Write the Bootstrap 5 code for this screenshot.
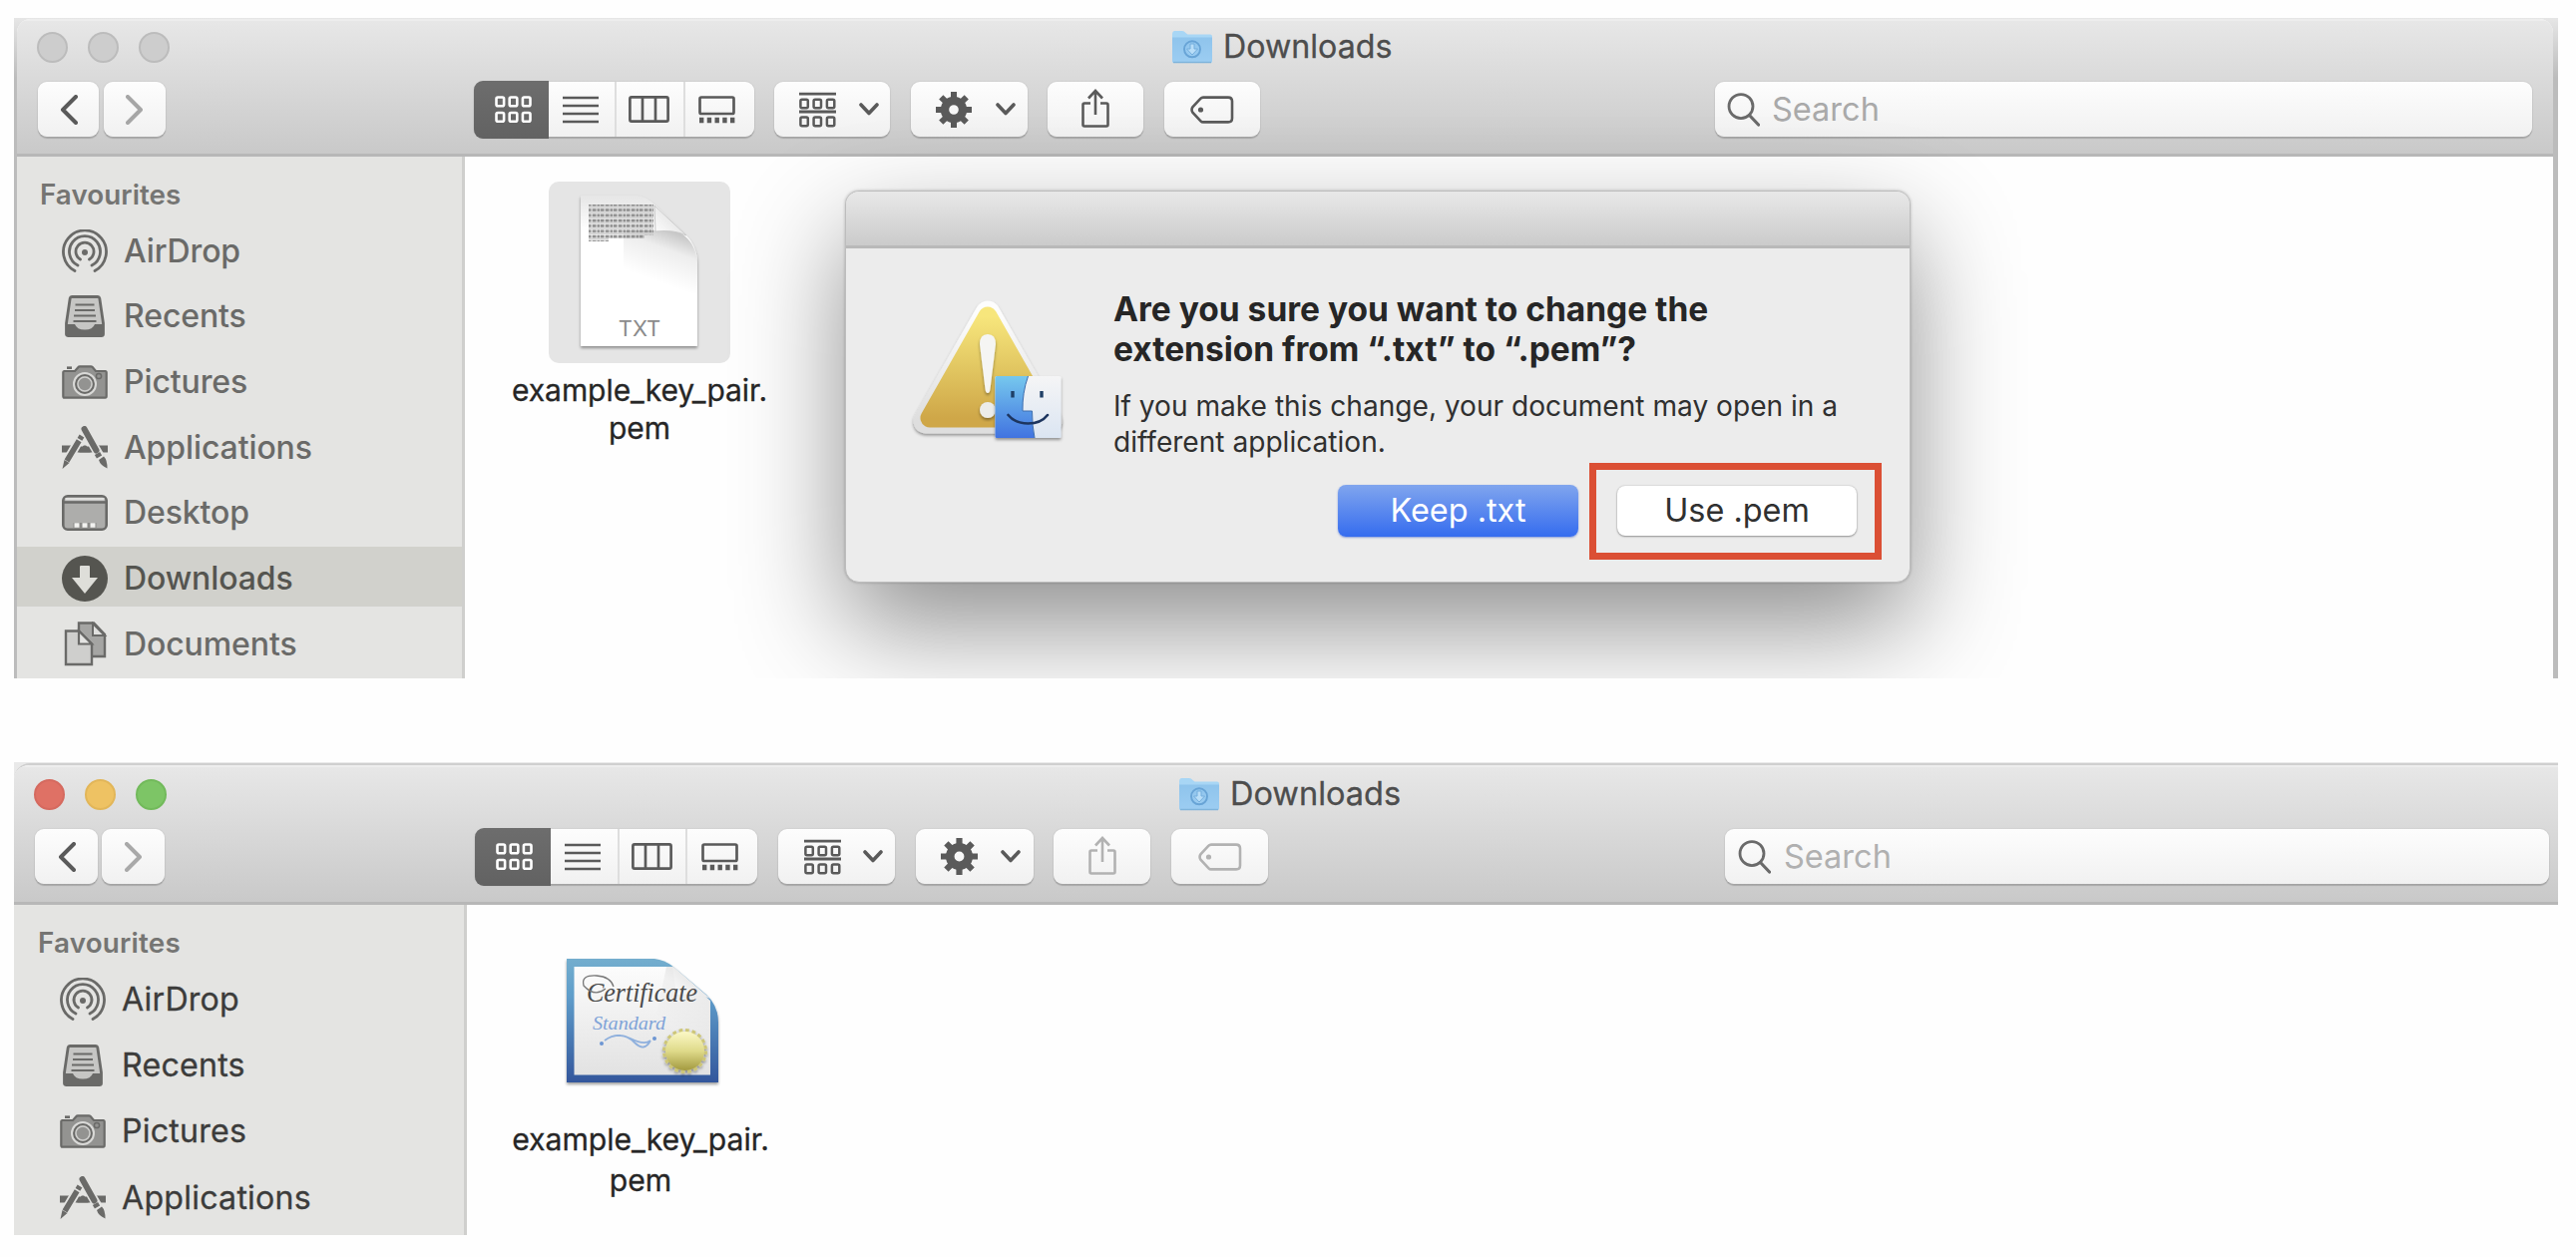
<!DOCTYPE html>
<html lang="en">
<head>
<meta charset="utf-8">
<title>Downloads</title>
<link href="https://cdn.jsdelivr.net/npm/bootstrap@5.3.0/dist/css/bootstrap.min.css" rel="stylesheet">
<style>
  body { font-family: Inter, "Liberation Sans", sans-serif; background: #fefefe; color: #262626; padding: 18px 18px 0 14px; }
  svg { display: block; flex: none; overflow: visible; }
  .finder { position: relative; width: 2550px; overflow: hidden; background: #fefefe; --tool: #5a5a5a; --dim: #5a5a5a; }
  .finder-back { height: 662px; background: linear-gradient(#e6e6e6, #bcbcbc 60px); padding: 1px 5px 0 3px; }
  .finder-back .pane-frame { border-radius: 14px 14px 0 0; height: 661px; }
  .finder-front { margin-top: 84px; height: 474px; padding-top: 1px; background: #e9e9e9; --dim: #b2b2b2; }
  .finder-front .pane-frame { border-radius: 16px 0 0 0; height: 473px; border-top: 2px solid #cfcfcf; }
  .pane-frame { overflow: hidden; background: #fefefe; }
  .titlebar { background: linear-gradient(#e7e7e7, #c9c9c9); border-bottom: 3px solid #b7b7b7; height: 138px; border-top: 2px solid #ededed; }
  .finder-front .titlebar { height: 140px; }
  .title-row { height: 52px; color: #4d4d4d; font-size: 32.2px; font-weight: 400; -webkit-text-stroke: .3px; }
  .finder-front .title-row { height: 54px; }
  .lamps { width: 1154px; gap: 20px; padding-left: 20px; }
  .lamp { width: 31px; height: 31px; border-radius: 50%; background: #cdcdcd; border: 2px solid #bcbcbc; }
  .lamp-r { background: #df7165; border-color: #d56a5f; }
  .lamp-y { background: #eec263; border-color: #e2b659; }
  .lamp-g { background: #7dc566; border-color: #72ba5b; }
  .tool-row { color: var(--tool); }
  .tool { height: 55px; border-radius: 9px; background: linear-gradient(#fdfdfd, #f1f1f1); box-shadow: 0 2px 1px rgba(0,0,0,.17), 0 0 2px rgba(0,0,0,.13); display: flex; align-items: center; border: 0; padding: 0; color: inherit; }
  .tool > svg, .seg > svg { margin: 0 auto; }
  .seg { height: 55px; display: flex; align-items: center; border-right: 2px solid #dedede; flex: 1; padding-right: 2px; }
  .seg:last-child { border: 0; padding-right: 5px; }
  .seg-on { flex: none; height: 58px; margin: -2px 0; background: linear-gradient(#6d6d6d, #626262); color: #fff; border: 0; border-radius: 9px 0 0 9px; padding: 0 0 0 3px; }
  .find-box { font-size: 32.5px; color: #a9a9a9; line-height: 1; }
  .side { width: 449px; background: #e4e4e2; border-right: 3px solid #cfcfcd; color: #6a6a68; font-size: 32px; font-weight: 500; letter-spacing: -.1px; line-height: 60px; }
  .finder-front .side { width: 454px; color: #3c3c3b; font-weight: 400; letter-spacing: .2px; font-size: 32.2px; -webkit-text-stroke: .3px; }
  .side-head { font-size: 27.8px; font-weight: 600; color: #757573; line-height: 40px; -webkit-text-stroke: 0; }
  .finder-back .side-head { letter-spacing: .05px; }
  .side-item { height: 60px; margin-bottom: 5.7px; gap: 16px; padding: 3px 0 0 45px; }
  .side-item svg { color: #6a6a68; }
  .side-on { background: #d1d1cc; color: #555550; }
  .side-on svg { color: #555550; }
  .finder-front .side-item { margin-bottom: 6.4px; padding-left: 46px; }
  .file-item { width: 300px; text-align: center; font-size: 30px; letter-spacing: -.05px; -webkit-text-stroke: .3px; }
  .file-item svg { -webkit-text-stroke: 0; }
  .thumb { width: 182px; height: 182px; border-radius: 10px; margin: 0 auto; }
  .thumb-on { background: #e5e5e5; }
  .alert-box { position: absolute; left: 833px; top: 173px; width: 1068px; height: 393px; border-radius: 14px; background: #ececec; border: 1px solid #bdbdbd; box-shadow: 0 44px 106px rgba(0,0,0,.44), 0 0 3px rgba(0,0,0,.25); }
  .alert-bar { height: 57px; border-radius: 13px 13px 0 0; background: linear-gradient(#e8e8e8, #cbcbcb); border-bottom: 3px solid #b9b9b9; }
  .alert-h { font-size: 33.5px; font-weight: 700; line-height: 40px; color: #262626; margin: 0; }
  .alert-p { font-size: 28.1px; line-height: 35.5px; margin: 0; color: #303030; }
  .choice { font-size: 32.4px; line-height: 1; padding: 0; border: 0; border-radius: 8px; font-weight: 400; }
  .choice-main { width: 241px; height: 52px; color: #fff; background: linear-gradient(#80a5ee, #356cef); margin: 22px 11px 0 0; box-shadow: 0 1px 2px rgba(40,80,200,.5); }
  .choice-alt { width: 240px; height: 50px; color: #303030; background: #fff; box-shadow: 0 1px 2px rgba(0,0,0,.35), 0 0 2px rgba(0,0,0,.2); }
  .outlined { width: 293px; height: 97px; border: 7px solid #db4f34; padding-top: 16px; padding-left: 21px; }
</style>
<script src="https://cdn.jsdelivr.net/npm/bootstrap@5.3.0/dist/js/bootstrap.bundle.min.js"></script>
</head>
<body>
<svg width="0" height="0" class="position-absolute">
  <defs>
    <linearGradient id="gFolder" x1="0" y1="0" x2="0" y2="1"><stop offset="0" stop-color="#8fc4ec"/><stop offset="1" stop-color="#9ccdf2"/></linearGradient>
    <linearGradient id="gWarn" x1="0" y1="0" x2="0" y2="1"><stop offset="0" stop-color="#f7e67c"/><stop offset=".5" stop-color="#e2c762"/><stop offset="1" stop-color="#cfa748"/></linearGradient>
    <linearGradient id="gWarnEdge" x1="0" y1="0" x2="0" y2="1"><stop offset="0" stop-color="#fdfdfd"/><stop offset="1" stop-color="#dedede"/></linearGradient>
    <linearGradient id="gFaceL" x1="0" y1="0" x2="0" y2="1"><stop offset="0" stop-color="#76c8ee"/><stop offset="1" stop-color="#4173e0"/></linearGradient>
    <linearGradient id="gFaceR" x1="0" y1="0" x2="0" y2="1"><stop offset="0" stop-color="#f5f5f6"/><stop offset="1" stop-color="#dbe5f2"/></linearGradient>
    <linearGradient id="gCert" x1="0" y1="0" x2="0" y2="1"><stop offset="0" stop-color="#74aece"/><stop offset=".3" stop-color="#5f9dca"/><stop offset="1" stop-color="#33569c"/></linearGradient>
    <linearGradient id="gPaper" x1="0" y1="0" x2="0" y2="1"><stop offset="0" stop-color="#fcfcfc"/><stop offset="1" stop-color="#e2e2e2"/></linearGradient>
    <linearGradient id="gSeal" x1="0" y1="0" x2="0" y2="1"><stop offset="0" stop-color="#fbf8c6"/><stop offset=".5" stop-color="#dfda8a"/><stop offset="1" stop-color="#a39a3f"/></linearGradient>
    <linearGradient id="gCurl" x1="0" y1="1" x2=".6" y2=".4"><stop offset="0" stop-color="#ffffff"/><stop offset="1" stop-color="#e6e6e6"/></linearGradient>
    <linearGradient id="gShade" x1=".62" y1="0" x2=".3" y2=".75"><stop offset="0" stop-color="#000" stop-opacity=".22"/><stop offset=".35" stop-color="#000" stop-opacity=".07"/><stop offset="1" stop-color="#000" stop-opacity="0"/></linearGradient>
    <linearGradient id="gTop" x1="0" y1="0" x2="0" y2="1"><stop offset="0" stop-color="#000" stop-opacity=".1"/><stop offset="1" stop-color="#000" stop-opacity="0"/></linearGradient>
    <filter id="fDrop" x="-20%" y="-20%" width="140%" height="140%"><feDropShadow dx="0" dy="2" stdDeviation="1.6" flood-opacity=".38"/></filter>
    <pattern id="pText" width="13" height="5.3" patternUnits="userSpaceOnUse"><path d="M0 2H3.6M4.6 2H8.6M9.4 2H12.4" stroke="#8c8c8c" stroke-width="2.800"/><path d="M0 4.500H13" stroke="#cfcfcf" stroke-width="1.500"/></pattern>

    <symbol id="back" viewBox="0 0 18 30"><path d="M16 2 3 15 16 28" fill="none" stroke="currentColor" stroke-width="4" stroke-linecap="round" stroke-linejoin="round"/></symbol>
    <symbol id="down" viewBox="0 0 20 13"><path d="M2 2 10 10.5 18 2" fill="none" stroke="currentColor" stroke-width="3.6" stroke-linecap="round" stroke-linejoin="round"/></symbol>
    <symbol id="icons" viewBox="0 0 37 28"><g fill="none" stroke="currentColor" stroke-width="2.6"><rect x="1.5" y="1.5" width="7.6" height="8.8" rx="1.5"/><rect x="14.7" y="1.5" width="7.6" height="8.8" rx="1.5"/><rect x="27.9" y="1.5" width="7.6" height="8.8" rx="1.5"/><rect x="1.5" y="17" width="7.6" height="8.8" rx="1.5"/><rect x="14.7" y="17" width="7.6" height="8.8" rx="1.5"/><rect x="27.9" y="17" width="7.6" height="8.8" rx="1.5"/></g></symbol>
    <symbol id="lines" viewBox="0 0 36 28"><path d="M0 2H36M0 10H36M0 18H36M0 26H36" stroke="currentColor" stroke-width="2.6"/></symbol>
    <symbol id="cols" viewBox="0 0 41 27"><path d="M3 1.4H38Q39.6 1.4 39.6 3V24Q39.6 25.6 38 25.6H3Q1.4 25.6 1.4 24V3Q1.4 1.4 3 1.4ZM14 1V26M27 1V26" fill="none" stroke="currentColor" stroke-width="2.7"/></symbol>
    <symbol id="gallery" viewBox="0 0 37 28"><rect x="1.5" y="1.5" width="34" height="16.5" rx="1.5" fill="none" stroke="currentColor" stroke-width="2.7"/><path d="M1 24.5H36.5" stroke="currentColor" stroke-width="5.4" stroke-dasharray="4.4 3.35"/></symbol>
    <symbol id="grouped" viewBox="0 0 37 36"><path d="M0 2.2H37M0 20H37" stroke="currentColor" stroke-width="2.8"/><g fill="none" stroke="currentColor" stroke-width="2.5"><rect x="1.4" y="7.8" width="7.4" height="8.4" rx="1.5"/><rect x="14.6" y="7.8" width="7.4" height="8.4" rx="1.5"/><rect x="27.9" y="7.8" width="7.4" height="8.4" rx="1.5"/><rect x="1.4" y="25.6" width="7.4" height="8.6" rx="1.5"/><rect x="14.6" y="25.6" width="7.4" height="8.6" rx="1.5"/><rect x="27.9" y="25.6" width="7.4" height="8.6" rx="1.5"/></g></symbol>
    <symbol id="gear" viewBox="-18 -18 36 36"><circle r="9" fill="none" stroke="currentColor" stroke-width="8.4"/><g stroke="currentColor" stroke-width="6" stroke-linecap="butt"><path d="M0-18V-11M0 18V11M-18 0H-11M18 0H11"/><path d="M0-18V-11M0 18V11M-18 0H-11M18 0H11" transform="rotate(45)"/></g></symbol>
    <symbol id="share" viewBox="0 0 28 39"><path d="M9 14.5H3Q1.5 14.5 1.5 16V36Q1.5 37.5 3 37.5H25Q26.5 37.5 26.5 36V16Q26.5 14.5 25 14.5H19M14 26V2M7 9.5 14 2 21 9.5" fill="none" stroke="currentColor" stroke-width="2.6"/></symbol>
    <symbol id="tag" viewBox="0 0 44 28"><path d="M13 1.6H38Q42 1.6 42 5.5V22.5Q42 26.4 38 26.4H13Q11.5 26.4 10.5 25.3L2.6 17Q.5 14 2.6 11L10.5 2.7Q11.5 1.6 13 1.6Z" fill="none" stroke="currentColor" stroke-width="2.6"/><circle cx="10.5" cy="14" r="2.6" fill="currentColor"/></symbol>
    <symbol id="lens" viewBox="0 0 33 34"><circle cx="14" cy="13.6" r="12" fill="none" stroke="#6a6a6a" stroke-width="2.8"/><path d="M22.5 22.5 31.5 32" stroke="#6a6a6a" stroke-width="3.2" stroke-linecap="round"/></symbol>
    <symbol id="folder" viewBox="0 0 40 33"><path d="M0 3.5Q0 0 2.5 0H10Q12 0 13.5 2L15.5 3.5H38Q40 3.5 40 5.5V30Q40 32 38 32H2Q0 32 0 30Z" fill="#a8d6f5"/><path d="M0 6.5H40V30Q40 32 38 32H2Q0 32 0 30Z" fill="url(#gFolder)"/><path d="M1 31.5H39" stroke="#7fb4db" stroke-width="1.5"/><circle cx="20" cy="18.3" r="8" fill="none" stroke="#68a4d6" stroke-width="1.9"/><path d="M18 13H22V18H25.5L20 24 14.500 18H18Z" fill="#b9def8" stroke="#74aedd" stroke-width="1"/></symbol>

    <symbol id="airdrop" viewBox="0 0 46 44"><g fill="none" stroke="currentColor" stroke-width="2.8" stroke-linecap="round"><path d="M13 41.500A21.500 21.500 0 1 1 33 41.500"/><path d="M16 36A15.500 15.500 0 1 1 30 36" /><path d="M18.500 30A9 9 0 1 1 27.500 30"/></g><circle cx="23" cy="23" r="3" fill="currentColor"/></symbol>
    <symbol id="recents" viewBox="0 0 46 42"><path d="M10 1.500H36Q37.500 1.500 37.800 3L41.500 28V39Q41.500 40.500 39.500 40.500H6.500Q4.500 40.500 4.500 39V28L8.200 3Q8.500 1.500 10 1.500Z" fill="#c6c6c4" stroke="currentColor" stroke-width="2.800"/><path d="M13.500 9.500H32.500M13 15H33M12 20.500H34M11.500 26H34.500" stroke="currentColor" stroke-width="2"/><path d="M4 29H13Q15 34.500 23 34.500T33 29H42V40.500H4Z" fill="currentColor"/></symbol>
    <symbol id="camera" viewBox="0 0 46 34"><path d="M2.500 6H13L16.500 2Q17 1.300 18 1.300H29Q30 1.300 30.700 2L34 6H43.500Q44.700 6 44.700 7.500V31Q44.700 32.700 43.500 32.700H2.500Q1.300 32.700 1.300 31V7.500Q1.300 6 2.500 6Z" fill="#939391" stroke="currentColor" stroke-width="2.2"/><path d="M5 2.700H10" stroke="currentColor" stroke-width="2.6"/><circle cx="23" cy="19" r="11" fill="#939391" stroke="#d9d9d7" stroke-width="2"/><circle cx="23" cy="19" r="8.800" fill="none" stroke="currentColor" stroke-width="1.800"/><circle cx="23" cy="19" r="7" fill="#939391" stroke="#cfcfcd" stroke-width="1.500"/><circle cx="37" cy="11" r="2.600" fill="none" stroke="currentColor" stroke-width="1.500"/></symbol>
    <symbol id="apps" viewBox="0 0 46 43"><path d="M0 19.500H46V26.500H0Z" fill="currentColor"/><path d="M21 3 44 42M25 3 2 42" stroke="#e4e4e2" stroke-width="11"/><path d="M15.500 26.500 19 20.500H27L30.500 26.500Z" fill="currentColor"/><path d="M20 10 5 35" stroke="currentColor" stroke-width="5.500" stroke-dasharray="4 1.500 25 1.500"/><path d="M2.500 34 7.500 37 .5 43Z" fill="currentColor"/><path d="M22.500 3 34.500 24.500" stroke="currentColor" stroke-width="6" stroke-linecap="round"/><path d="M35.500 27.500 37.500 31" stroke="currentColor" stroke-width="6"/><path d="M37 34 42 30.500Q45.500 34 45.500 42.500 38.500 39.500 37 34Z" fill="currentColor"/></symbol>
    <symbol id="desktop" viewBox="0 0 46 36"><rect x="1.300" y="1.300" width="43.400" height="33.400" rx="4.500" fill="#adadab" stroke="currentColor" stroke-width="2.600"/><path d="M3.500 4.200H42.500" stroke="#e0e0de" stroke-width="2.500"/><path d="M2 7.500H44" stroke="currentColor" stroke-width="2.400"/><path d="M11.500 34V28H34.500V34" fill="#8a8a88"/><path d="M12.500 30.500H34" stroke="#f2f2f0" stroke-width="4.500" stroke-dasharray="5 3"/></symbol>
    <symbol id="dload" viewBox="0 0 46 46"><circle cx="23" cy="23" r="23" fill="currentColor"/><path d="M18 11Q18 10 19 10H27Q28 10 28 11V22H36L23 38 10 22H18Z" fill="#deded9"/></symbol>
    <symbol id="docs" viewBox="0 0 46 45"><path d="M17 1.500H32L43 13V35H17Z" fill="#a5a5a3" stroke="currentColor" stroke-width="2.400"/><path d="M31 2V14H43Z" fill="#e0e0de" stroke="currentColor" stroke-width="2"/><path d="M4 9.500H17L30 22.500V43H4Z" fill="#cfcfcd" stroke="currentColor" stroke-width="2.400"/><path d="M17 9.500V22.500H30Z" fill="#e4e4e2" stroke="currentColor" stroke-width="2.200"/></symbol>
  </defs>
</svg>

<main>
  <section class="finder finder-back">
    <div class="pane-frame d-flex flex-column">
      <header class="titlebar">
        <div class="title-row d-flex align-items-center">
          <div class="lamps d-flex"><i class="lamp"></i><i class="lamp"></i><i class="lamp"></i></div>
          <svg class="ms-1" width="40" height="33"><use href="#folder"/></svg>
          <span style="margin-left:11px">Downloads</span>
        </div>
        <div class="tool-row d-flex" style="padding:9px 0 0 21px">
          <div class="tool" style="width:61px"><svg width="18" height="30"><use href="#back"/></svg></div>
          <div class="tool" style="width:62px;margin-left:5px;color:#a6a6a6"><svg width="18" height="30" transform="scale(-1 1)"><use href="#back"/></svg></div>
          <div class="tool" style="width:281px;margin-left:309px">
            <span class="seg seg-on" style="width:75px"><svg width="37" height="28"><use href="#icons"/></svg></span>
            <span class="seg"><svg width="36" height="28"><use href="#lines"/></svg></span>
            <span class="seg"><svg width="41" height="27"><use href="#cols"/></svg></span>
            <span class="seg"><svg width="37" height="28"><use href="#gallery"/></svg></span>
          </div>
          <div class="tool" style="width:116px;margin-left:20px;padding:0 11px 0 25px"><svg class="ms-0" width="37" height="36"><use href="#grouped"/></svg><svg class="me-0" width="20" height="13"><use href="#down"/></svg></div>
          <div class="tool" style="width:117px;margin-left:21px;padding:0 12px 0 25px"><svg class="ms-0" width="36" height="36"><use href="#gear"/></svg><svg class="me-0" width="20" height="13"><use href="#down"/></svg></div>
          <div class="tool" style="width:96px;margin-left:20px;padding-bottom:3px"><svg width="28" height="39"><use href="#share"/></svg></div>
          <div class="tool" style="width:96px;margin-left:21px"><svg width="44" height="28"><use href="#tag"/></svg></div>
          <div class="tool find-box" style="width:819px;margin-left:456px;padding-left:12px"><svg class="mx-0" width="33" height="34"><use href="#lens"/></svg><span style="margin-left:12px;padding-top:2px">Search</span></div>
        </div>
      </header>
      <div class="d-flex flex-grow-1">
        <nav class="side">
          <div class="side-head" style="padding:18px 0 5px 23px">Favourites</div>
          <div class="side-item d-flex align-items-center"><svg width="46" height="44"><use href="#airdrop"/></svg>AirDrop</div>
          <div class="side-item d-flex align-items-center"><svg width="46" height="42"><use href="#recents"/></svg>Recents</div>
          <div class="side-item d-flex align-items-center"><svg width="46" height="34"><use href="#camera"/></svg>Pictures</div>
          <div class="side-item d-flex align-items-center"><svg width="46" height="43"><use href="#apps"/></svg>Applications</div>
          <div class="side-item d-flex align-items-center"><svg width="46" height="36"><use href="#desktop"/></svg>Desktop</div>
          <div class="side-item side-on d-flex align-items-center"><svg width="46" height="46"><use href="#dload"/></svg>Downloads</div>
          <div class="side-item d-flex align-items-center"><svg width="46" height="45"><use href="#docs"/></svg>Documents</div>
        </nav>
        <div style="padding:25px 0 0 25px">
          <div class="file-item" style="line-height:38px">
            <div class="thumb thumb-on">
              <svg width="182" height="182" viewBox="0 0 182 182">
                <path d="M32 14H88Q98 15 107 24L137 53Q149 65 149 82V165H32Z" fill="#fff" filter="url(#fDrop)"/>
                <path d="M32 14H88Q98 15 107 24V50H32Z" fill="url(#gTop)"/>
                <path d="M75 49H128Q149 60 149 84V112H75Z" fill="url(#gShade)"/>
                <path d="M40 23H105V54H96V57H60V60H40Z" fill="url(#pText)"/>
                <path d="M106 24 138 54Q126 48 107 50Z" fill="url(#gCurl)" stroke="#c9c9c9" stroke-width="1"/>
                <text x="91" y="155" text-anchor="middle" font-family="Inter" font-size="22" fill="#8b8b8b">TXT</text>
              </svg>
            </div>
            <div style="padding-top:8px">example_key_pair.<br>pem</div>
          </div>
        </div>
      </div>
    </div>
    <div class="alert-box">
      <div class="alert-bar"></div>
      <div class="d-flex" style="padding-left:66px">
        <svg width="152" height="142" viewBox="0 0 152 142" style="margin-top:51px">
          <path d="M76 14 14 122H138Z" fill="url(#gWarnEdge)" stroke="url(#gWarnEdge)" stroke-width="25" stroke-linejoin="round" filter="url(#fDrop)"/>
          <path d="M76 17 18 119H134Z" fill="url(#gWarn)" stroke="url(#gWarn)" stroke-width="19" stroke-linejoin="round"/>
          <path d="M76 35Q84 35 84 45L78.500 90Q78 94 76 94T73.500 90L68 45Q68 35 76 35Z" fill="#f5f5f3" filter="url(#fDrop)"/>
          <circle cx="76" cy="111" r="8" fill="#ececea" filter="url(#fDrop)"/>
          <g transform="translate(83.500 77)"><rect width="66" height="62" rx="1.500" fill="url(#gFaceR)" filter="url(#fDrop)"/><path d="M1.500 0H33Q27 17 27.500 35H37Q37 50 39.500 62H1.500Q0 62 0 60.500V1.500Q0 0 1.500 0Z" fill="url(#gFaceL)"/><path d="M33 0Q27 17 27.500 35H37Q37 50 39.500 62" fill="none" stroke="#3e6fae" stroke-width="1"/><path d="M17.500 15V21.500M46.500 15V21.500" stroke="#1f3f66" stroke-width="3.400"/><path d="M13 39Q20 47.500 33 47.500T52.500 39" fill="none" stroke="#1d355f" stroke-width="2.600" stroke-linecap="round"/></g>
        </svg>
        <div style="margin-left:50px">
          <h2 class="alert-h text-nowrap" style="padding-top:41px">Are you sure you want to change the<br>extension from “.txt” to “.pem”?</h2>
          <p class="alert-p text-nowrap" style="padding-top:20px">If you make this change, your document may open in a<br>different application.</p>
        </div>
      </div>
      <div class="d-flex justify-content-end" style="margin-top:3px;padding-right:28px">
        <button class="btn choice choice-main">Keep .txt</button>
        <div class="outlined"><button class="btn choice choice-alt">Use .pem</button></div>
      </div>
    </div>
  </section>

  <section class="finder finder-front">
    <div class="pane-frame d-flex flex-column">
      <header class="titlebar">
        <div class="title-row d-flex align-items-center">
          <div class="lamps d-flex"><i class="lamp lamp-r"></i><i class="lamp lamp-y"></i><i class="lamp lamp-g"></i></div>
          <svg style="margin-left:14px" width="40" height="33"><use href="#folder"/></svg>
          <span style="margin-left:11px;font-size:32.500px">Downloads</span>
        </div>
        <div class="tool-row d-flex" style="padding:8px 0 0 21px">
          <div class="tool" style="width:63px"><svg width="18" height="30"><use href="#back"/></svg></div>
          <div class="tool" style="width:63px;margin-left:4px;color:#a9a9a9"><svg width="18" height="30" transform="scale(-1 1)"><use href="#back"/></svg></div>
          <div class="tool" style="width:283px;margin-left:311px">
            <span class="seg seg-on" style="width:76px"><svg width="37" height="28"><use href="#icons"/></svg></span>
            <span class="seg"><svg width="36" height="28"><use href="#lines"/></svg></span>
            <span class="seg"><svg width="41" height="27"><use href="#cols"/></svg></span>
            <span class="seg"><svg width="37" height="28"><use href="#gallery"/></svg></span>
          </div>
          <div class="tool" style="width:117px;margin-left:21px;padding:0 12px 0 26px"><svg class="ms-0" width="37" height="36"><use href="#grouped"/></svg><svg class="me-0" width="20" height="13"><use href="#down"/></svg></div>
          <div class="tool" style="width:118px;margin-left:21px;padding:0 13px 0 25px"><svg class="ms-0" width="37" height="37"><use href="#gear"/></svg><svg class="me-0" width="20" height="13"><use href="#down"/></svg></div>
          <div class="tool" style="width:97px;margin-left:20px;padding-bottom:3px;color:var(--dim)"><svg width="28" height="39"><use href="#share"/></svg></div>
          <div class="tool" style="width:97px;margin-left:21px;color:var(--dim)"><svg width="44" height="28"><use href="#tag"/></svg></div>
          <div class="tool find-box" style="width:826px;margin-left:458px;padding-left:13px;color:#b0b0b0"><svg class="mx-0" width="33" height="34"><use href="#lens"/></svg><span style="margin-left:13px;padding-top:2px">Search</span></div>
        </div>
      </header>
      <div class="d-flex flex-grow-1">
        <nav class="side">
          <div class="side-head" style="padding:18px 0 5px 24px">Favourites</div>
          <div class="side-item d-flex align-items-center"><svg width="46" height="44"><use href="#airdrop"/></svg>AirDrop</div>
          <div class="side-item d-flex align-items-center"><svg width="46" height="42"><use href="#recents"/></svg>Recents</div>
          <div class="side-item d-flex align-items-center"><svg width="46" height="34"><use href="#camera"/></svg>Pictures</div>
          <div class="side-item d-flex align-items-center"><svg width="46" height="43"><use href="#apps"/></svg>Applications</div>
        </nav>
        <div style="padding:54px 0 0 24px">
          <div class="file-item" style="line-height:41px;font-size:30.200px">
            <svg width="152" height="124" viewBox="0 0 152 124" style="margin-left:76px">
              <path d="M0 0H88Q98 1 107 8L140 36Q152 47 152 64V124H0Z" fill="url(#gCert)" filter="url(#fDrop)"/>
              <path d="M7.500 8H106L144 42V116.500H7.500Z" fill="url(#gPaper)"/>
              <path d="M100 8H106L144 42V85H84Z" fill="url(#gShade)" opacity=".5"/>
              <path d="M106 7 144 40Q130 34 110 36Z" fill="url(#gCurl)"/>
              <text x="20" y="43" font-family="Liberation Serif" font-style="italic" font-size="27" textLength="111" lengthAdjust="spacingAndGlyphs" fill="#4a4a4a">Certificate</text>
              <path d="M39 30Q28 39 17 27 14 16 30 17 44 18 47 28" fill="none" stroke="#777" stroke-width="1.300"/>
              <text x="26" y="71" font-family="Liberation Serif" font-style="italic" font-size="18.500" textLength="73" lengthAdjust="spacingAndGlyphs" fill="#7fa3d8">Standard</text>
              <path d="M38 82Q50 73 64 80T84 82M46 78Q58 74 68 84T84 82" fill="none" stroke="#8fb0dd" stroke-width="1.800"/><circle cx="35" cy="85" r="2" fill="#6d96d3"/><circle cx="88" cy="80" r="2" fill="#6d96d3"/>
              <g filter="url(#fDrop)"><circle cx="118.500" cy="92.500" r="20.500" fill="none" stroke="#cdc678" stroke-width="4" stroke-dasharray="3.600 2.840"/><circle cx="118.500" cy="92.500" r="19.500" fill="url(#gSeal)"/></g>
            </svg>
            <div style="padding-top:37px">example_key_pair.<br>pem</div>
          </div>
        </div>
      </div>
    </div>
  </section>
</main>
</body>
</html>
